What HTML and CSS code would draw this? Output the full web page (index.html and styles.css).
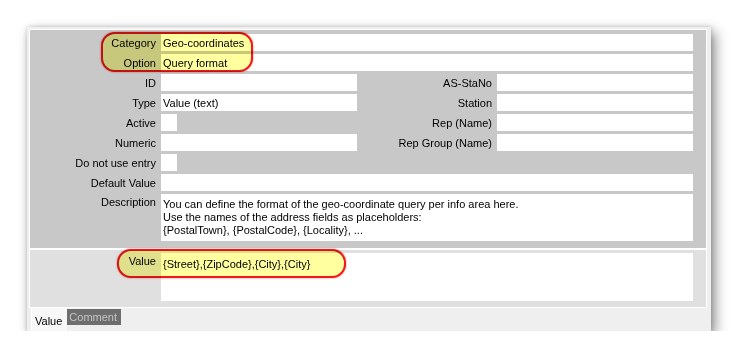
FILE: index.html
```html
<!DOCTYPE html>
<html>
<head>
<meta charset="utf-8">
<link rel="stylesheet" href="styles.css">
</head>
<body>
<div class="window">
  <div class="inner">
    <div class="grey">
      <div class="form">
        <div class="lbl">Category</div><div class="fld wide">Geo-coordinates</div>
        <div class="lbl">Option</div><div class="fld wide">Query format</div>
        <div class="lbl">ID</div><div class="fld"></div><div class="lbl">AS-StaNo</div><div class="fld"></div>
        <div class="lbl">Type</div><div class="fld">Value (text)</div><div class="lbl">Station</div><div class="fld"></div>
        <div class="lbl">Active</div><div class="cell"><div class="chk"></div></div><div class="lbl">Rep (Name)</div><div class="fld"></div>
        <div class="lbl">Numeric</div><div class="fld"></div><div class="lbl">Rep Group (Name)</div><div class="fld"></div>
        <div class="lbl">Do not use entry</div><div class="cell full"><div class="chk"></div></div>
        <div class="lbl">Default Value</div><div class="fld wide"></div>
        <div class="lbl top">Description</div><div class="fld wide desc">You can define the format of the geo-coordinate query per info area here.<br>Use the names of the address fields as placeholders:<br>{PostalTown}, {PostalCode}, {Locality}, ...</div>
      </div>
    </div>
    <div class="lower">
      <div class="lbl top vlbl">Value</div>
      <div class="valbox">{Street},{ZipCode},{City},{City}</div>
    </div>
  </div>
  <div class="tabs">
    <div class="tab active">Value</div>
    <div class="tab dim">Comment</div>
  </div>
  <div class="mark mark-cat"></div>
  <div class="mark mark-val"></div>
</div>
</body>
</html>
```
FILE: styles.css
```css
html, body {
  margin: 0;
  padding: 0;
  background: #ffffff;
}
body {
  padding: 27px 0 0 27px;
  font-family: "Liberation Sans", Arial, sans-serif;
  font-size: 11px;
  color: #000;
}
.window {
  position: relative;
  width: 678px;
  padding: 2px 4px 0 2px;
  background: #efefef;
  box-shadow: 4px 5px 12px rgba(0, 0, 0, 0.45), 0 0 4px rgba(0, 0, 0, 0.18);
}
.inner {
  border: 1px solid #ffffff;
}
.grey {
  background: #c8c8c8;
  padding: 4px 11px 7px 0;
}
.form {
  display: grid;
  grid-template-columns: 131px 196px 140px 196px;
  grid-template-rows: repeat(8, 17px) 47px;
  row-gap: 3px;
}
.lbl {
  text-align: right;
  padding-right: 5px;
  line-height: 18px;
  white-space: nowrap;
}
.lbl.top {
  line-height: 13px;
  padding-top: 2px;
}
.fld {
  background: #ffffff;
  line-height: 18px;
  padding-left: 2px;
  white-space: nowrap;
  overflow: hidden;
}
.fld.wide {
  grid-column: 2 / 5;
}
.cell.full {
  grid-column: 2 / 5;
}
.chk {
  width: 16px;
  height: 17px;
  background: #ffffff;
}
.fld.desc {
  line-height: 13px;
  padding-top: 4px;
  box-sizing: border-box;
  white-space: normal;
}
.lower {
  border-top: 2px solid #ffffff;
  background: #e0e0e0;
  padding: 3px 11px 6px 0;
  display: flex;
}
.vlbl {
  width: 126px;
  padding-top: 3px;
}
.valbox {
  width: 532px;
  height: 48px;
  background: #ffffff;
  padding: 5px 0 0 2px;
  box-sizing: border-box;
  line-height: 13px;
}
.tabs {
  display: flex;
  height: 23px;
  align-items: flex-start;
  padding-left: 2px;
}
.tab {
  line-height: 16px;
}
.tab.active {
  background: #f8f8f8;
  border-left: 1px solid #ffffff;
  padding: 5px 5px 2px 3px;
}
.tab.dim {
  background: #6e6e6e;
  color: #c4c4c4;
  padding: 0 4px 0 2px;
  margin-top: 1px;
}
.mark {
  position: absolute;
  background: #ffffa0;
  border: 2px solid #f01818;
  mix-blend-mode: multiply;
  box-sizing: border-box;
  box-shadow: 0 0 2px rgba(255, 0, 0, 0.6);
}
.mark-cat {
  left: 74px;
  top: 5px;
  width: 152px;
  height: 40px;
  border-radius: 14px;
}
.mark-val {
  left: 90px;
  top: 222px;
  width: 229px;
  height: 29px;
  border-radius: 14px;
}
```
